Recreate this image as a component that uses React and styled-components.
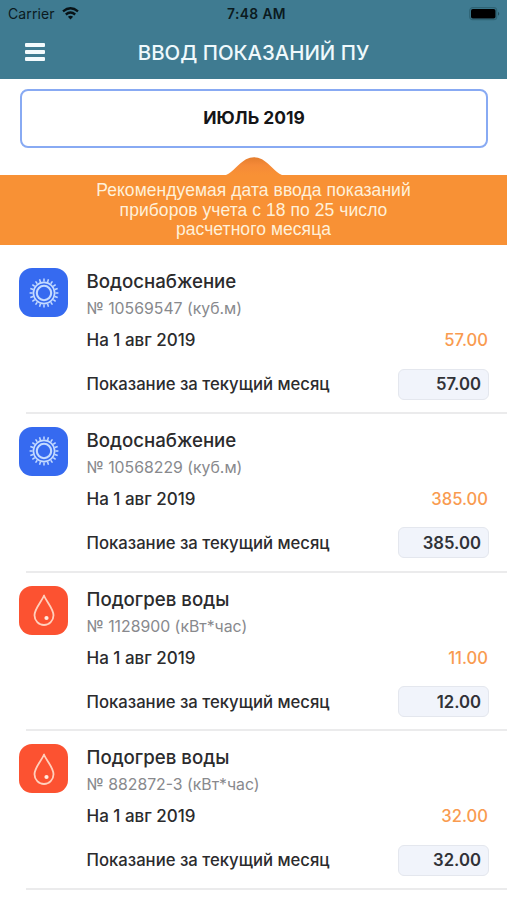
import React from "react";
import styled, { createGlobalStyle } from "styled-components";

const GlobalStyle = createGlobalStyle`
  * { box-sizing: border-box; }
  body {
    margin: 0;
    background: #fff;
    font-family: Inter, "Noto Sans", sans-serif;
    color: #2b2b2d;
  }
`;

const Screen = styled.main`
  width: 507px;
  height: 900px;
  overflow: hidden;
  background: #fff;
`;

const Header = styled.header`
  height: 79px;
  background: #3f7b91;
`;

const StatusBar = styled.div`
  display: grid;
  grid-template-columns: 1fr auto 1fr;
  align-items: center;
  height: 27px;
  padding: 0 6px 0 8px;
  color: #0b1a20;
`;

const Carrier = styled.div`
  display: flex;
  align-items: center;
  gap: 7px;
  font-size: 14px;
  letter-spacing: 0.1px;
`;

const Clock = styled.time`
  font-size: 13.8px;
  font-weight: 600;
  letter-spacing: 0.4px;
  padding-left: 4px;
`;

const Battery = styled.svg`
  justify-self: end;
`;

const NavBar = styled.div`
  display: grid;
  grid-template-columns: 70px 1fr 70px;
  align-items: center;
  height: 51px;
`;

const MenuButton = styled.button`
  display: flex;
  flex-direction: column;
  gap: 3px;
  width: 20px;
  margin-left: 25px;
  padding: 0 0 2px;
  border: 0;
  background: none;
`;

const MenuBar = styled.span`
  height: 4px;
  border-radius: 1px;
  background: #f3fafd;
`;

const Title = styled.h1`
  margin: 0;
  text-align: center;
  white-space: nowrap;
  font-size: 20.4px;
  font-weight: 500;
  line-height: 28px;
  color: #eff9fc;
`;

const MonthPicker = styled.button`
  display: flex;
  align-items: center;
  justify-content: center;
  width: 468px;
  height: 59px;
  margin: 10px 0 0 20px;
  padding: 0 0 2px;
  border: 2px solid #88aaf3;
  border-radius: 8px;
  background: #fff;
  color: #151517;
  font: 700 17.4px Inter, sans-serif;
`;

const Notch = styled.svg`
  display: block;
  width: 60px;
  height: 18px;
  margin: 9px auto 0;
`;

const Notice = styled.p`
  height: 70px;
  margin: 0;
  padding-top: 6px;
  background: #f89135;
  color: #fff0d9;
  text-align: center;
  white-space: pre-line;
  letter-spacing: 0.06px;
  font: 400 17.5px/19.7px "Liberation Sans", Arial, sans-serif;
`;

const MeterList = styled.ul`
  margin: 10px 0 0;
  padding: 0;
  list-style: none;
`;

const MeterRow = styled.li`
  display: grid;
  grid-template-columns: 67.5px 1fr;
  height: 158.8px;
  padding: 13px 18px 0 19px;
  background: linear-gradient(#ebebec, #ebebec) 26px 100% / 100% 2px no-repeat;
`;

const IconTile = styled.div`
  display: grid;
  place-items: center;
  width: 49px;
  height: 49px;
  border-radius: 13px;
  background: ${({ $kind }) => ($kind === "water" ? "#366af0" : "#fc5231")};
`;

const Details = styled.div`
  display: flex;
  flex-direction: column;
`;

const MeterName = styled.h2`
  margin: 0;
  font-size: 18.65px;
  font-weight: 500;
  line-height: 26px;
`;

const MeterNumber = styled.div`
  margin-top: 5px;
  font-size: 15.8px;
  line-height: 20px;
  color: #88898d;
`;

const Line = styled.div`
  display: flex;
  align-items: center;
  justify-content: space-between;
  height: ${({ $h }) => $h}px;
  margin-top: ${({ $gap }) => $gap}px;
  font-size: ${({ $size }) => $size}px;
  font-weight: 450;
  white-space: nowrap;
`;

const PreviousValue = styled.span`
  padding-right: 1px;
  font-size: 16.6px;
  font-weight: 500;
  color: #f99b50;
`;

const ReadingInput = styled.input`
  width: 91px;
  height: 31px;
  padding: 0 7px;
  border: 1px solid #e4e7ee;
  border-radius: 6px;
  background: #f1f4fb;
  color: #303237;
  text-align: right;
  font: 600 16.7px Inter, sans-serif;
`;

const meters = [
  { kind: "water", name: "Водоснабжение", number: "№ 10569547 (куб.м)", previous: "57.00", current: "57.00" },
  { kind: "water", name: "Водоснабжение", number: "№ 10568229 (куб.м)", previous: "385.00", current: "385.00" },
  { kind: "heat", name: "Подогрев воды", number: "№ 1128900 (кВт*час)", previous: "11.00", current: "12.00" },
  { kind: "heat", name: "Подогрев воды", number: "№ 882872-3 (кВт*час)", previous: "32.00", current: "32.00" },
];

function WifiIcon() {
  return (
    <svg width="17" height="13" viewBox="0 0 17 13" fill="none" stroke="#081216" strokeWidth="2.3">
      <path d="M1 4.4 Q8.5 -1.8 16 4.4" />
      <path d="M3.8 7.5 Q8.5 3.6 13.2 7.5" />
      <path d="M8.5 12.5 L5.9 9.8 Q8.5 7.7 11.1 9.8 Z" fill="#081216" stroke="none" />
    </svg>
  );
}

function SunIcon() {
  const rays = Array.from({ length: 20 }, (_, i) => i * 18);
  return (
    <svg width="32" height="32" viewBox="-16 -16 32 32" fill="none" stroke="#c4dbff">
      <circle r="10.6" strokeWidth="1.7" />
      <circle r="7.2" strokeWidth="2.1" />
      {rays.map((angle) => (
        <path key={angle} d="M0 -11.4 V-14.4" strokeWidth="1.5" transform={`rotate(${angle})`} />
      ))}
    </svg>
  );
}

function DropIcon() {
  return (
    <svg width="24" height="34" viewBox="0 0 24 34" fill="none">
      <path
        d="M12 2.5 C10 8 2.5 15.5 2.5 22.2 A9.5 9.8 0 0 0 21.5 22.2 C21.5 15.5 14 8 12 2.5 Z"
        stroke="#ffd0bd"
        strokeWidth="1.8"
        strokeLinejoin="round"
      />
      <circle cx="14.5" cy="25" r="2.1" fill="#ffebe0" />
    </svg>
  );
}

export default function App() {
  return (
    <Screen>
      <GlobalStyle />
      <Header>
        <StatusBar>
          <Carrier>
            Carrier <WifiIcon />
          </Carrier>
          <Clock>7:48 AM</Clock>
          <Battery width="32" height="14" viewBox="0 0 32 14">
            <rect x="0.7" y="0.7" width="27" height="12" rx="3" fill="none" stroke="#2f6475" strokeWidth="1.2" />
            <rect x="2" y="2" width="24.5" height="9.5" rx="1.8" fill="#000" />
            <path d="M29 4.8 Q31.5 6.7 29 8.8 Z" fill="#23505f" />
          </Battery>
        </StatusBar>
        <NavBar>
          <MenuButton aria-label="Меню">
            <MenuBar />
            <MenuBar />
            <MenuBar />
          </MenuButton>
          <Title>ВВОД ПОКАЗАНИЙ ПУ</Title>
        </NavBar>
      </Header>
      <MonthPicker>ИЮЛЬ 2019</MonthPicker>
      <Notch viewBox="0 0 60 18">
        <defs>
          <linearGradient id="notch" x1="0" y1="0" x2="0" y2="1">
            <stop offset="0" stopColor="#e47d2e" />
            <stop offset="0.45" stopColor="#f58a38" />
            <stop offset="1" stopColor="#f89135" />
          </linearGradient>
        </defs>
        <path d="M2 18 C9 15 14 7 22 2.2 Q30 -1.8 38 2.2 C46 7 51 15 58 18 Z" fill="url(#notch)" />
      </Notch>
      <Notice>{"Рекомендуемая дата ввода показаний\nприборов учета с 18 по 25 число\nрасчетного месяца"}</Notice>
      <MeterList>
        {meters.map((meter) => (
          <MeterRow key={meter.number}>
            <IconTile $kind={meter.kind}>{meter.kind === "water" ? <SunIcon /> : <DropIcon />}</IconTile>
            <Details>
              <MeterName>{meter.name}</MeterName>
              <MeterNumber>{meter.number}</MeterNumber>
              <Line $h={20} $gap={11} $size={17}>
                <span>На 1 авг 2019</span>
                <PreviousValue>{meter.previous}</PreviousValue>
              </Line>
              <Line $h={32} $gap={18} $size={16.7}>
                <span>Показание за текущий месяц</span>
                <ReadingInput defaultValue={meter.current} aria-label="Показание за текущий месяц" />
              </Line>
            </Details>
          </MeterRow>
        ))}
      </MeterList>
    </Screen>
  );
}
